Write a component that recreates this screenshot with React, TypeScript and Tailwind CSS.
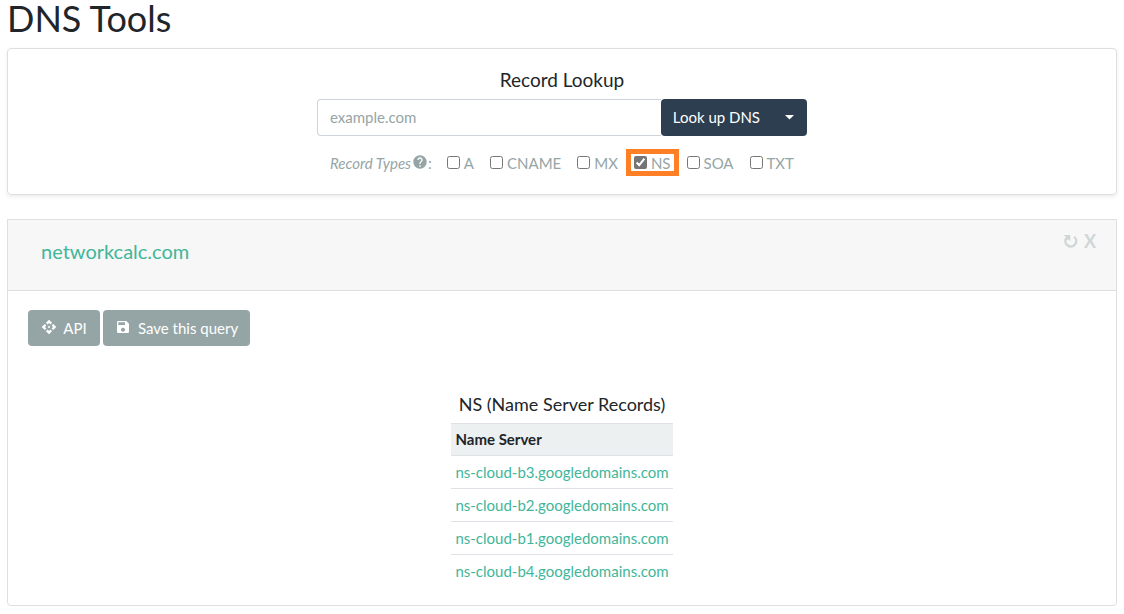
import React from "react"
import { MdApi, MdSave, MdHelp } from "react-icons/md"

interface RecordType {
    name: string
    checked: boolean
}

const recordTypes: RecordType[] = [
    { name: "A", checked: false },
    { name: "CNAME", checked: false },
    { name: "MX", checked: false },
    { name: "NS", checked: true },
    { name: "SOA", checked: false },
    { name: "TXT", checked: false },
]

const nameServers = [
    "ns-cloud-b3.googledomains.com",
    "ns-cloud-b2.googledomains.com",
    "ns-cloud-b1.googledomains.com",
    "ns-cloud-b4.googledomains.com",
]

function LookupForm() {
    return (
        <form
            className="rounded border border-[#dfdfdf] px-5 pt-5 pb-[18px] shadow-[0_2px_4px_rgba(0,0,0,0.075)]"
            onSubmit={(e) => e.preventDefault()}
        >
            <h2 className="text-center text-[19px] leading-[22px]">
                <label htmlFor="host">Record Lookup</label>
            </h2>
            <div className="mx-auto mt-2 flex h-[37px] max-w-[490px]">
                <input
                    id="host"
                    type="text"
                    placeholder="example.com"
                    className="min-w-0 flex-1 rounded-l border border-r-0 border-[#ced4da] px-3 pb-0.5 placeholder:text-[#95a5a6]"
                />
                <button type="submit" className="rounded-l bg-[#2c3e50] pr-3 pb-0.5 pl-3 text-white">
                    Look up DNS
                </button>
                <button type="button" aria-label="More options" className="rounded-r bg-[#2c3e50] px-[13px]">
                    <svg width="9" height="5" viewBox="0 0 9 5" fill="#fff">
                        <path d="M0 0h9L4.5 4.5z" />
                    </svg>
                </button>
            </div>
            <div className="mx-auto mt-[13px] flex min-h-[27px] w-fit flex-wrap items-center gap-x-4 text-[#95a5a6]">
                <span className="-mr-px flex items-center whitespace-nowrap">
                    <em className="mr-px">Record Types</em>
                    <MdHelp size={16} className="mb-0.5" />:
                </span>
                {recordTypes.map((t) => (
                    <label
                        key={t.name}
                        className={
                            t.checked
                                ? "-mx-2 flex h-[27px] items-center gap-1 border-5 border-[#ff7f27] px-[3px]"
                                : "flex items-center gap-1"
                        }
                    >
                        <input type="checkbox" defaultChecked={t.checked} className="size-[13px] accent-[#757575]" />
                        {t.name}
                    </label>
                ))}
            </div>
        </form>
    )
}

function NameServerTable() {
    return (
        <table className="mx-auto mt-[47px]">
            <caption className="pb-2 text-lg leading-[22px]">NS (Name Server Records)</caption>
            <thead>
                <tr className="border-y border-[#dee2e6] bg-[#ecf0f1]">
                    <th className="px-1 pt-1 pb-[5px] text-left font-bold">Name Server</th>
                </tr>
            </thead>
            <tbody>
                {nameServers.map((ns) => (
                    <tr className="border-b border-[#dee2e6] last:border-b-0" key={ns}>
                        <td className="px-1 py-[5px]">
                            <a href="#" className="text-[#41b69a]">{ns}</a>
                        </td>
                    </tr>
                ))}
            </tbody>
        </table>
    )
}

function RefreshIcon() {
    return (
        <svg width="15" height="15" viewBox="0 0 15 15" fill="none">
            <path d="M11.2 2.9A5.4 5.4 0 1 1 3 4.5" stroke="currentColor" strokeWidth="2.4" />
            <path d="M0 1h7.2v6L5.4 5.2 3.6 6.4 2 4.2 3 2.8z" fill="currentColor" />
        </svg>
    )
}

function ResultCard() {
    return (
        <section className="mt-6 rounded-b border border-[#dfdfdf]">
            <header className="flex h-[71px] items-start justify-between border-b border-[#dfdfdf] bg-[#f7f7f7] pr-5 pl-[33px]">
                <h2 className="mt-[19px] text-xl leading-6">
                    <a href="#" className="text-[#41b69a]">networkcalc.com</a>
                </h2>
                <div className="mt-[9px] flex gap-1.5 text-lg leading-6 font-bold text-[#d0d6d6]">
                    <button type="button" aria-label="Refresh">
                        <RefreshIcon />
                    </button>
                    <button type="button" aria-label="Close">X</button>
                </div>
            </header>
            <div className="px-5 pt-[19px] pb-[18px]">
                <div className="flex gap-[3px]">
                    <button type="button" className="flex h-9 min-w-[72px] items-center justify-center gap-1.5 rounded bg-[#95a5a6] px-3 text-white">
                        <MdApi size={16} className="mb-[3px]" />
                        API
                    </button>
                    <button type="button" className="flex h-9 items-center gap-[7px] rounded bg-[#95a5a6] px-3 text-white">
                        <MdSave size={16} className="mb-[3px]" />
                        Save this query
                    </button>
                </div>
                <NameServerTable />
            </div>
        </section>
    )
}

export default function App() {
    return (
        <main className="bg-white px-[7px] pb-2 font-[Lato,sans-serif] text-[15px] leading-[22px] text-[#212529]">
            <h1 className="pb-3 text-4xl leading-9">DNS Tools</h1>
            <LookupForm />
            <ResultCard />
        </main>
    )
}
